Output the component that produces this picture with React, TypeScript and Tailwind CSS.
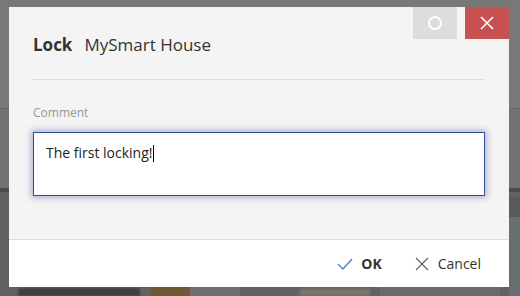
import React from "react";

export default function App() {
  return (
    <div className="relative w-[520px] h-[296px] overflow-hidden bg-[#787878]" style={{ fontFamily: '"Open Sans", "Noto Sans", sans-serif' }}>
      {/* dimmed page behind the dialog */}
      <div className="absolute left-0 top-[108px] w-[520px] h-[1px] bg-[#666666]" />
      <div className="absolute left-0 top-[109px] w-[520px] h-[80px] bg-[#727272]" />
      <div className="absolute left-0 top-[188px] w-[520px] h-[4px] bg-[#4c4c4c]" />
      <div className="absolute left-0 top-[192px] w-[520px] h-[104px] bg-[#626262]" />
      <div className="absolute left-[509px] top-[197px] w-[11px] h-[20px] bg-[#5a5a5a]" />
      <div className="absolute left-[509px] top-[217px] w-[11px] h-[79px] bg-[#66706f]" />
      <div className="absolute left-[18px] top-[288px] w-[122px] h-[8px] rounded-t-[4px] bg-[#3e3e3e] blur-[1px]" />
      <div className="absolute left-[150px] top-[287px] w-[40px] h-[9px] bg-[#6e5838]" />
      <div className="absolute left-[190px] top-[287px] w-[50px] h-[9px] bg-[#707070]" />
      <div className="absolute left-[300px] top-[289px] w-[70px] h-[7px] bg-[#7a7470] blur-[1px]" />
      <div className="absolute left-[380px] top-[287px] w-[120px] h-[9px] bg-[#6a6a6a]" />

      <div className="relative pl-[9px] pt-[7px]">
        <div className="w-[500px] h-[280px] flex flex-col bg-[#f4f4f4]">
          <div className="relative flex-1 flex flex-col px-[24px]">
            <div className="absolute right-0 top-0 flex gap-[8px]">
              <div className="w-[44px] h-[32px] bg-[#dddddd] flex items-center justify-center">
                <div className="w-[14px] h-[14px] rounded-full border-[2px] border-white" />
              </div>
              <div className="w-[44px] h-[32px] bg-[#c75050] flex items-center justify-center">
                <svg width="14" height="14" viewBox="0 0 14 14">
                  <path d="M1 1 L13 13 M13 1 L1 13" stroke="white" strokeWidth="1.6" fill="none" />
                </svg>
              </div>
            </div>
            <div className="pt-[26px] h-[72px] flex items-start gap-[12px] text-[17px] leading-[24px] text-[#333333]">
              <span className="font-bold">Lock</span>
              <span>MySmart House</span>
            </div>
            <div className="h-[1px] bg-[#dcdcdc]" />
            <div className="pt-[25px] text-[12px] leading-[16px] text-[#999999]">Comment</div>
            <div className="mt-[11px] h-[64px] bg-white border border-[#2a4e9a] shadow-[0_0_6px_2px_rgba(60,70,150,0.35)] px-[12px] pt-[7px]">
              <span className="text-[14px] leading-[20px] text-[#222222]">The first locking!</span>
              <span className="inline-block w-[1px] h-[17px] bg-black align-[-4px]" />
            </div>
          </div>
          <div className="h-[1px] bg-[#dcdcdc]" />
          <div className="h-[47px] bg-white flex items-center justify-end pr-[28px] gap-[33px] text-[14px] text-[#333333]">
            <div className="flex items-center gap-[8px]">
              <svg width="16" height="12" viewBox="0 0 16 12">
                <path d="M1 6 L6 11 L15 1" stroke="#4a7fcb" strokeWidth="1.3" fill="none" />
              </svg>
              <span className="font-bold">OK</span>
            </div>
            <div className="flex items-center gap-[9px]">
              <svg width="14" height="14" viewBox="0 0 14 14">
                <path d="M1 1 L13 13 M13 1 L1 13" stroke="#666666" strokeWidth="1.2" fill="none" />
              </svg>
              <span>Cancel</span>
            </div>
          </div>
        </div>
      </div>
    </div>
  );
}
